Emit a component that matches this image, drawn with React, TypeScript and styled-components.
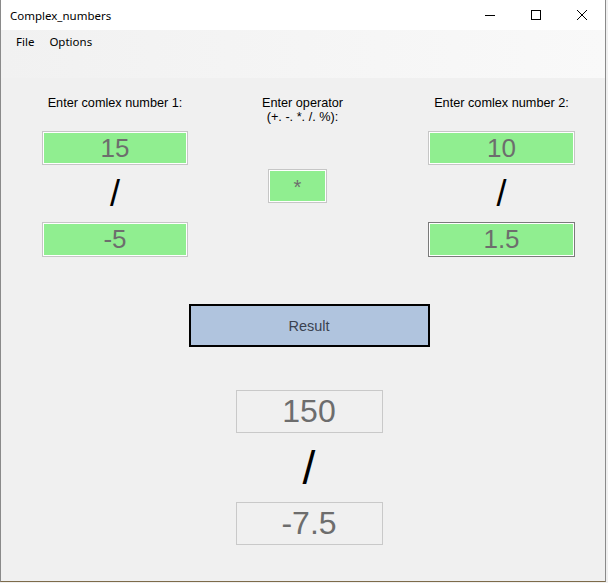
import styled, {createGlobalStyle} from "styled-components";

const GlobalStyle = createGlobalStyle`
    html, body {
        margin: 0;
        padding: 0;
        background: #f0f0f0;
    }
`

const Window = styled.div`
    width: 604px;
    height: 581px;
    border-left: 1px solid #8a8a8a;
    border-right: 1px solid #8a8a8a;
    border-bottom: 1px solid #7d6b4a;
    background: #f0f0f0;
    display: flex;
    flex-direction: column;
    font-family: "Liberation Sans", Arial, sans-serif;
`

const TitleBar = styled.div`
    height: 30px;
    background: #ffffff;
    display: flex;
    align-items: center;
    justify-content: space-between;
`

const Title = styled.span`
    font-family: "Noto Sans", "Segoe UI", sans-serif;
    font-size: 11.5px;
    color: #000;
    padding-left: 9px;
`

const Controls = styled.div`
    display: flex;
    height: 100%;
`

const ControlButton = styled.div`
    width: 46px;
    height: 30px;
    display: flex;
    align-items: center;
    justify-content: center;
`

const MenuBar = styled.div`
    height: 48px;
    background: linear-gradient(to right, #f1f1f1, #f9f9f9);
    display: flex;
    align-items: flex-start;
    padding: 2px 0 0 7px;
    box-sizing: border-box;
`

const MenuItem = styled.span`
    font-family: "Noto Sans", "Segoe UI", sans-serif;
    font-size: 11.5px;
    color: #000;
    padding: 2px 7px 2px 8px;
`

const Content = styled.div`
    flex: 1;
    display: flex;
    flex-direction: column;
`

const InputsGrid = styled.div`
    display: grid;
    grid-template-columns: 146px 1fr 147px;
    padding: 18px 30px 0 41px;
`

const Column = styled.div<{ $shift?: number }>`
    display: flex;
    flex-direction: column;
    align-items: center;
    margin-right: ${p => p.$shift ?? 0}px;
`

const Label = styled.div`
    font-size: 12.7px;
    line-height: 14px;
    color: #000;
    text-align: center;
    white-space: nowrap;
`

const NumberBox = styled.div<{ $width: number; $height: number; $focused?: boolean; $top?: number }>`
    width: ${p => p.$width}px;
    height: ${p => p.$height}px;
    margin-top: ${p => p.$top ?? 0}px;
    box-sizing: border-box;
    background: #90ee90;
    border: 1px solid ${p => (p.$focused ? "#7a7a7a" : "#c6c6c6")};
    box-shadow: inset 0 0 0 1px #ffffff;
    color: #6d6d6d;
    font-size: 26px;
    display: flex;
    align-items: center;
    justify-content: center;
`

const Operator = styled(NumberBox)`
    font-size: 20px;
    align-items: flex-start;
    padding-top: 6px;
    margin-right: 10px;
`

const Slash = styled.div<{ $size: number; $height: number }>`
    height: ${p => p.$height}px;
    font-size: ${p => p.$size}px;
    line-height: 1;
    color: #000;
    display: flex;
    align-items: center;
    justify-content: center;
`

const Center = styled.div`
    display: flex;
    flex-direction: column;
    align-items: center;
    padding-left: 12px;
`

const ResultButton = styled.button`
    margin-top: 47px;
    width: 241px;
    height: 43px;
    box-sizing: border-box;
    background: #b0c4de;
    border: 2px solid #000;
    font-family: "Liberation Sans", Arial, sans-serif;
    font-size: 14.5px;
    color: #3a4250;
    padding: 0;
`

const ResultBox = styled.div<{ $top: number }>`
    margin-top: ${p => p.$top}px;
    width: 147px;
    height: 43px;
    box-sizing: border-box;
    border: 1px solid #c9c9c9;
    color: #6d6d6d;
    font-size: 32px;
    display: flex;
    align-items: center;
    justify-content: center;
`

export default function App() {
    return (
        <>
            <GlobalStyle/>
            <Window>
                <TitleBar>
                    <Title>Complex_numbers</Title>
                    <Controls>
                        <ControlButton>
                            <svg width="10" height="10" viewBox="0 0 10 10">
                                <line x1="0" y1="5.5" x2="10" y2="5.5" stroke="#000" strokeWidth="1"/>
                            </svg>
                        </ControlButton>
                        <ControlButton>
                            <svg width="10" height="10" viewBox="0 0 10 10">
                                <rect x="0.5" y="0.5" width="9" height="9" fill="none" stroke="#000" strokeWidth="1"/>
                            </svg>
                        </ControlButton>
                        <ControlButton>
                            <svg width="10" height="10" viewBox="0 0 10 10">
                                <path d="M0 0 L10 10 M10 0 L0 10" stroke="#000" strokeWidth="1"/>
                            </svg>
                        </ControlButton>
                    </Controls>
                </TitleBar>
                <MenuBar>
                    <MenuItem>File</MenuItem>
                    <MenuItem>Options</MenuItem>
                </MenuBar>
                <Content>
                    <InputsGrid>
                        <Column>
                            <Label>Enter comlex number 1:</Label>
                            <NumberBox $width={146} $height={34} $top={21}>15</NumberBox>
                            <Slash $size={36} $height={57}>/</Slash>
                            <NumberBox $width={146} $height={35}>-5</NumberBox>
                        </Column>
                        <Column $shift={11}>
                            <Label>Enter operator<br/>(+. -. *. /. %):</Label>
                            <Operator $width={59} $height={34} $top={45}>*</Operator>
                        </Column>
                        <Column>
                            <Label>Enter comlex number 2:</Label>
                            <NumberBox $width={147} $height={34} $top={21}>10</NumberBox>
                            <Slash $size={36} $height={57}>/</Slash>
                            <NumberBox $width={147} $height={35} $focused>1.5</NumberBox>
                        </Column>
                    </InputsGrid>
                    <Center>
                        <ResultButton>Result</ResultButton>
                        <ResultBox $top={43}>150</ResultBox>
                        <Slash $size={46} $height={69}>/</Slash>
                        <ResultBox $top={0}>-7.5</ResultBox>
                    </Center>
                </Content>
            </Window>
        </>
    );
}
